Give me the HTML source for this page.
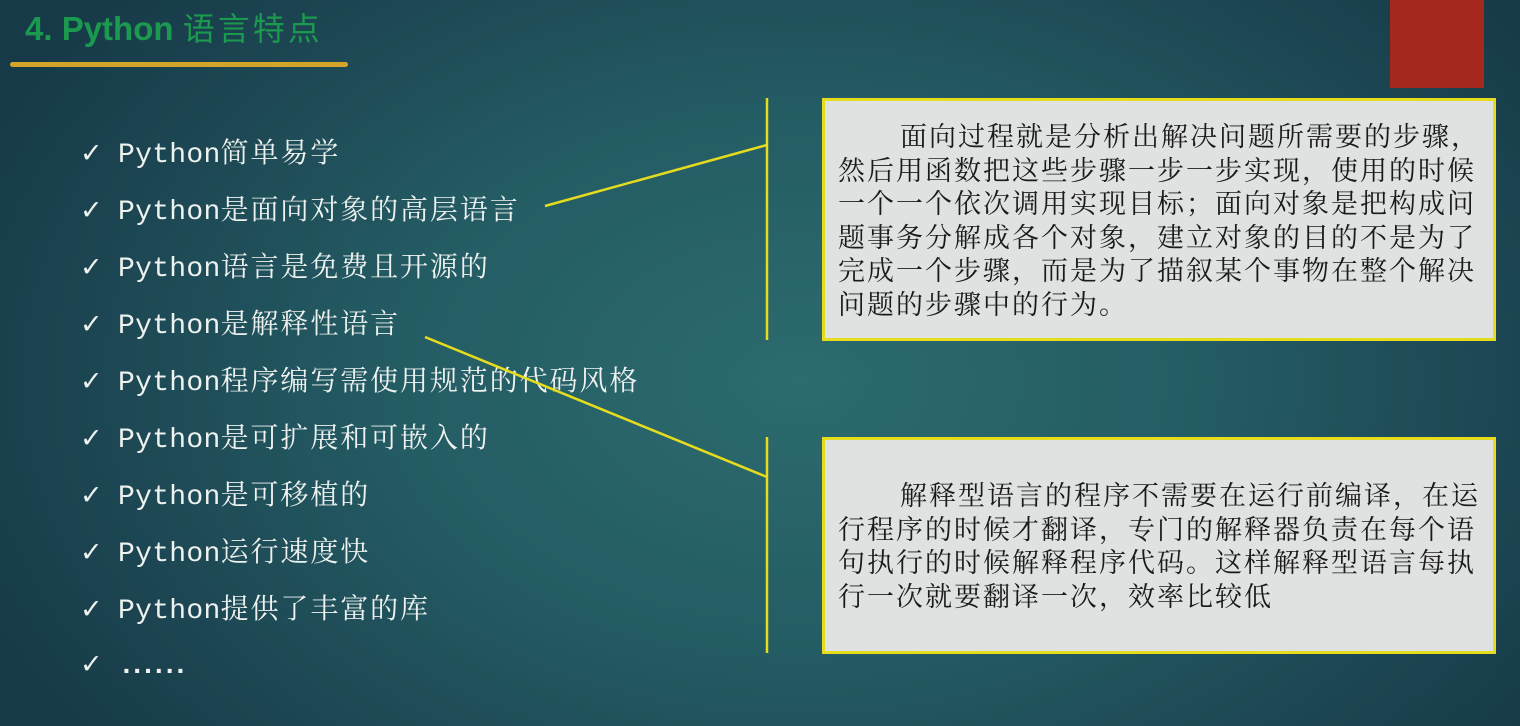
<!DOCTYPE html>
<html><head><meta charset="utf-8"><style>
*{margin:0;padding:0;box-sizing:border-box}
body{width:1520px;height:726px;overflow:hidden;position:relative;
background:radial-gradient(ellipse 900px 600px at 800px 380px,#2c6b6e 0%,#245c64 45%,#1c4552 80%,#173a48 100%);
font-family:"Liberation Mono","Noto Serif CJK SC",serif;}
.title{position:absolute;left:25px;top:4px;font:bold 33px "Liberation Sans","Noto Sans CJK SC",sans-serif;color:#1b9a4f;}
.title span{font-weight:normal;font-size:32px;letter-spacing:3px}
.ul{position:absolute;left:10px;top:62px;width:338px;height:5px;background:#d2a52a;border-radius:3px}
.red{position:absolute;left:1390px;top:0;width:94px;height:88px;background:#a5281e}
.item{position:absolute;left:80px;color:#eef2f0;font-size:28px;line-height:34px;white-space:nowrap;letter-spacing:1.9px}
.item i{font-style:normal;letter-spacing:0.3px}
.item b{display:inline-block;width:38px;font-weight:bold;font-family:"DejaVu Sans",sans-serif;font-size:27px;letter-spacing:0}
.box{position:absolute;left:822px;width:674px;background:#dfe2e1;border:3px solid #e6dc1e;padding:20px 12px 0 13px;
font-family:"Liberation Serif","Noto Serif CJK SC",serif;font-size:27px;letter-spacing:2px;line-height:33.5px;color:#1a1a1a;text-indent:62px}
</style></head><body>
<div class="title">4. Python <span>语言特点</span></div>
<div class="ul"></div>
<div class="red"></div>
<div class="item" style="top:137px"><b>✓</b><i>Python</i>简单易学</div>
<div class="item" style="top:194px"><b>✓</b><i>Python</i>是面向对象的高层语言</div>
<div class="item" style="top:251px"><b>✓</b><i>Python</i>语言是免费且开源的</div>
<div class="item" style="top:308px"><b>✓</b><i>Python</i>是解释性语言</div>
<div class="item" style="top:365px"><b>✓</b><i>Python</i>程序编写需使用规范的代码风格</div>
<div class="item" style="top:422px"><b>✓</b><i>Python</i>是可扩展和可嵌入的</div>
<div class="item" style="top:479px"><b>✓</b><i>Python</i>是可移植的</div>
<div class="item" style="top:536px"><b>✓</b><i>Python</i>运行速度快</div>
<div class="item" style="top:593px"><b>✓</b><i>Python</i>提供了丰富的库</div>
<div class="item" style="top:648px"><b>✓</b><span style="letter-spacing:-6px;font-weight:bold">......</span></div>
<svg style="position:absolute;left:0;top:0" width="1520" height="726">
<g stroke="#e6dc1e" stroke-width="2.5" fill="none">
<line x1="767" y1="98" x2="767" y2="340"/>
<line x1="767" y1="437" x2="767" y2="653"/>
<line x1="545" y1="206" x2="767" y2="145"/>
<line x1="425" y1="337" x2="767" y2="477"/>
</g></svg>
<div class="box" style="top:98px;height:243px">面向过程就是分析出解决问题所需要的步骤，然后用函数把这些步骤一步一步实现，使用的时候一个一个依次调用实现目标；面向对象是把构成问题事务分解成各个对象，建立对象的目的不是为了完成一个步骤，而是为了描叙某个事物在整个解决问题的步骤中的行为。</div>
<div class="box" style="top:437px;height:217px;padding-top:40px">解释型语言的程序不需要在运行前编译，在运行程序的时候才翻译，专门的解释器负责在每个语句执行的时候解释程序代码。这样解释型语言每执行一次就要翻译一次，效率比较低</div>
</body></html>
